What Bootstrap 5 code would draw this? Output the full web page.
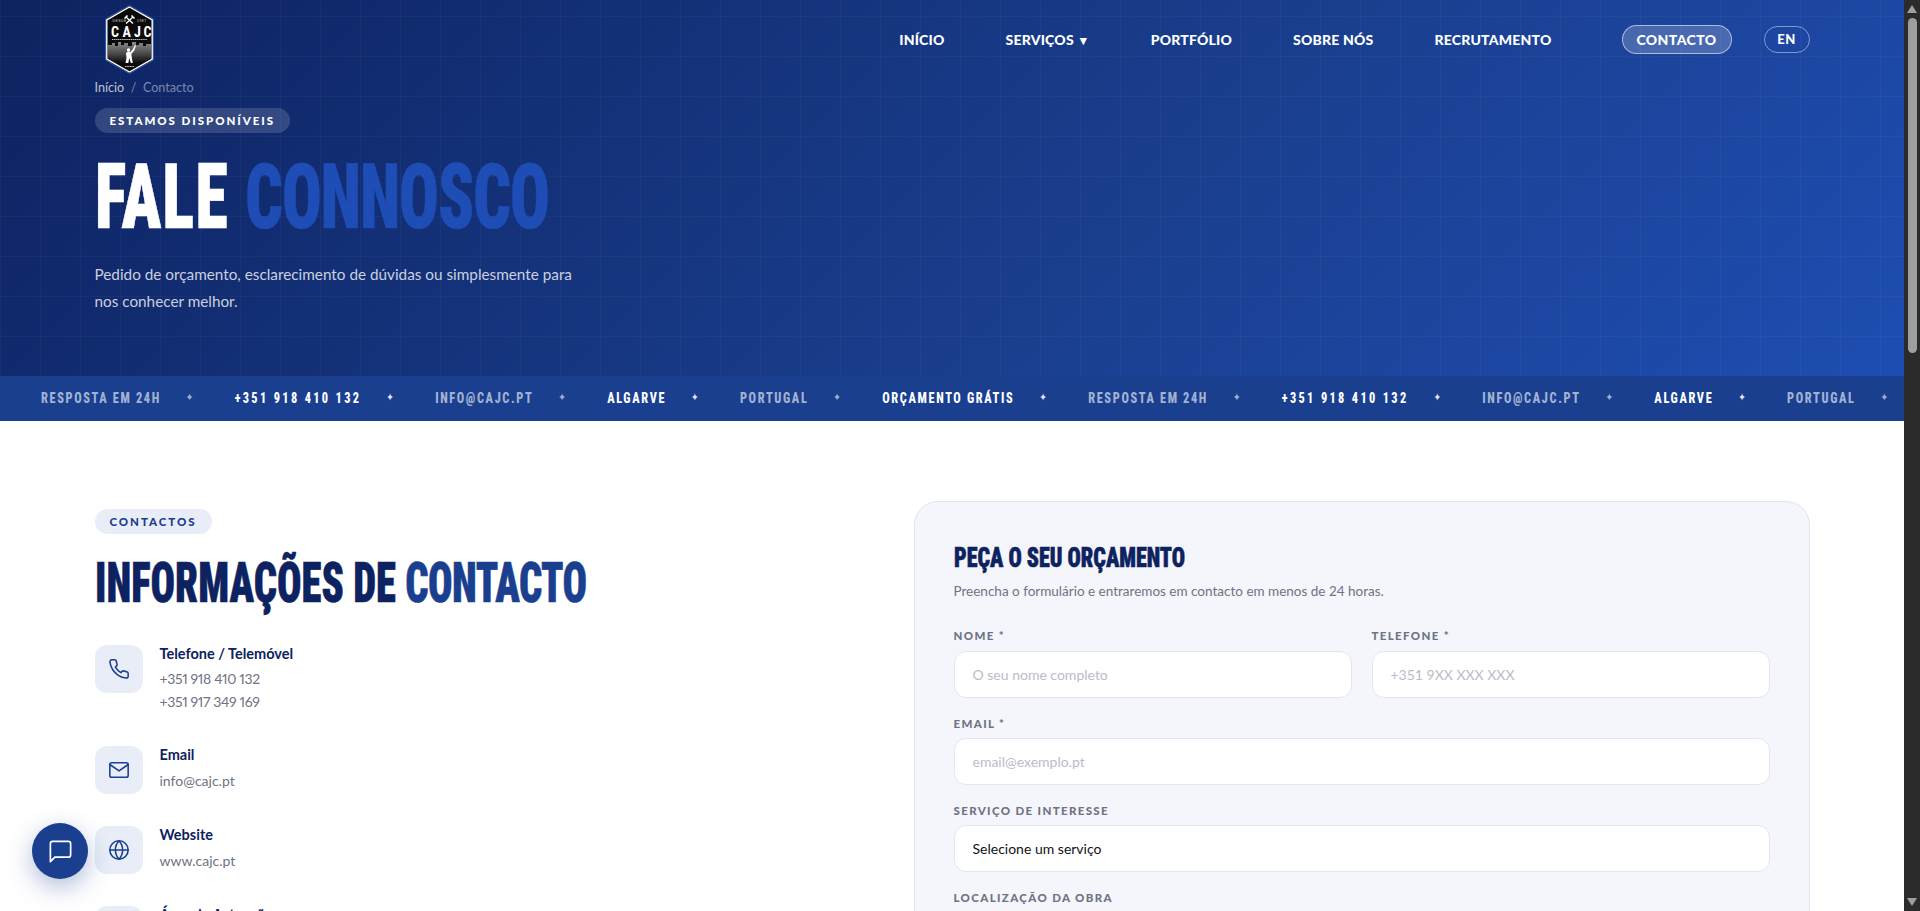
<!DOCTYPE html>
<html lang="pt">
<head>
<meta charset="utf-8">
<title>Contacto</title>
<link href="https://cdn.jsdelivr.net/npm/bootstrap@5.3.0/dist/css/bootstrap.min.css" rel="stylesheet">
<style>
html,body{height:911px;overflow:hidden;margin:0;background:#fff}
body{font-family:"Lato","Noto Sans",sans-serif;color:#0d2260}
.shell{height:911px;overflow:hidden}
.pagecol{flex:1 1 auto;min-width:0;height:911px;overflow:hidden}
.sbar{width:16px;flex:0 0 16px;background:#2b2b2b;height:911px}
.sb-arrow{height:18px}
.sb-thumb{width:9px;height:335px;margin-left:4px;background:#9f9f9f;border-radius:5px}
.hero{height:376px;padding:5px 94.5px 0 94.5px;background-color:#0f2566;
 background-image:linear-gradient(rgba(255,255,255,.03) 1px,transparent 1px),linear-gradient(90deg,rgba(255,255,255,.03) 1px,transparent 1px),linear-gradient(135deg,#0d2260 0%,#1a3f8f 60%,#1e4db2 100%);
 background-size:40px 40px,40px 40px,100% 100%;background-position:0 16px,0 0,0 0}
.logo-box{margin-left:10px;width:49px;height:69px}
.logo-txt{font-family:"Roboto","Liberation Sans",sans-serif;font-stretch:75%;font-weight:700;font-size:14px;fill:#fff}
.nav-top{height:69px}
.nav-lnk{color:#fff;text-decoration:none;font-weight:900;font-size:14px;letter-spacing:.2px;margin-right:61px;white-space:nowrap}
.nav-lnk.last{margin-right:70px}
.btn-contact{color:#fff;font-weight:900;font-size:14px;letter-spacing:.4px;background:rgba(255,255,255,.2);border:1px solid rgba(255,255,255,.55);border-radius:15px;width:110px;height:29px;line-height:27px;padding:0;margin-right:32px}
.btn-lang{color:#fff;font-weight:900;font-size:13px;letter-spacing:.6px;background:transparent;border:1px solid rgba(255,255,255,.45);border-radius:14px;width:46px;height:27px;line-height:25px;padding:0}
.crumbs{margin-top:5px;height:18px;line-height:18px;font-size:12.6px;color:rgba(255,255,255,.45)}
.crumbs b{font-weight:400;color:rgba(255,255,255,.72)}
.crumbs i{font-style:normal;margin:0 6.5px}
.pill-hero{display:inline-block;margin-top:11px;height:25px;line-height:25px;padding:0 15px;border-radius:13px;background:rgba(255,255,255,.15);color:#fff;font-size:11.5px;font-weight:900;letter-spacing:1.95px}
.display-cond{font-family:"Roboto","Liberation Sans",sans-serif;font-stretch:75%;font-weight:900;text-transform:uppercase;margin:0;white-space:nowrap;transform-origin:0 50%;-webkit-text-stroke:.6px currentColor}
.h-main{font-size:91px;line-height:91px;margin-top:19px;color:#fff;transform:scaleX(.725);letter-spacing:1.7px}
.h-main span{color:#1e4db5;letter-spacing:-1.4px}
.hero-p{margin:18px 0 0;font-size:15.3px;line-height:27px;color:rgba(255,255,255,.78)}
.ticker{height:45px;background:#1a3f8f;overflow:hidden;white-space:nowrap;padding-left:41px}
.tk-track{transform:scaleX(.82);transform-origin:0 50%}
.tk-item{font-family:"Roboto","Liberation Sans",sans-serif;font-stretch:75%;font-weight:800;font-size:15px;letter-spacing:2px;color:rgba(255,255,255,.62)}
.tk-item.on{color:#fff}
.tk-item.tk-num{letter-spacing:2.85px}
.tk-star{font-family:"DejaVu Sans",sans-serif;font-size:11px;color:rgba(255,255,255,.9);width:10px;text-align:center;margin:0 50px 0 30px}
.tk-star.dim{color:rgba(255,255,255,.6)}
.sect{padding:80px 94.5px 0 94.5px}
.left-col{flex:1 1 auto;min-width:0;padding-top:7px}
.pill-soft{display:inline-block;height:25px;line-height:25px;padding:0 15px;border-radius:13px;background:#e8edf7;color:#1a3f8f;font-size:11.5px;font-weight:900;letter-spacing:1.95px}
.h-sec{font-size:56px;line-height:56px;margin-top:21px;color:#0d2260;transform:scaleX(.727)}
.h-sec span{color:#1a3f8f;letter-spacing:-.8px}
.info-list{margin-top:34px}
.info-row{margin-bottom:32px}
.tile{width:48px;height:48px;flex:0 0 48px;border-radius:12px;background:#e8edf7;color:#1a3f8f;margin-right:17px}
.info-t{font-size:14.5px;font-weight:700;color:#0d2260;line-height:18px}
.info-v{font-size:14px;line-height:23px;color:#6f7385;margin-top:5px}
.info-num{font-variant-numeric:proportional-nums;letter-spacing:-.35px;margin-top:4px;padding-bottom:1px}
.form-wrap{flex:0 0 896px;width:896px;height:640px;background:#f4f6fb;border:1px solid #dfe4f0;border-radius:24px;padding:39px}
.h-form{font-size:28px;line-height:30px;color:#0d2260;margin-top:2px;transform:scaleX(.787)}
.form-sub{font-size:13.5px;line-height:18px;color:#6f7385;margin:9px 0 29px}
.fld-lbl{display:block;font-size:11.5px;font-weight:900;letter-spacing:1.35px;color:#6f7385;line-height:14px;margin-bottom:8px}
.fld-gap>.fld-lbl{margin-bottom:7px}
.fld{height:47px;border:1px solid #e2e6f0;border-radius:12px;background:#fff;padding:0 18px;font-size:14px;color:#111;appearance:none;box-shadow:none}
.fld::placeholder{color:#b9bcc8;opacity:1}
.fld-gap{margin-bottom:19px}
.row-form{--bs-gutter-x:20px}
.chat-btn{position:fixed;left:32px;top:823px;width:56px;height:56px;border-radius:50%;background:#1a3f8f;border:0;color:#fff;box-shadow:0 8px 24px rgba(26,63,143,.35);padding:0}
</style>
</head>
<body>
<div class="shell d-flex">
<div class="pagecol">
  <header class="hero">
    <nav class="nav-top d-flex align-items-center">
      <a href="#" class="logo-box d-block">
        <svg width="49" height="69" viewBox="0 0 49 69" aria-label="CAJC">
          <defs><linearGradient id="sky" x1="0" y1="0" x2="0" y2="1"><stop offset="0" stop-color="#8a8a8a"/><stop offset=".55" stop-color="#4a4a4a"/><stop offset="1" stop-color="#0a0a0a"/></linearGradient></defs>
          <polygon points="24.5,.5 48.5,14 48.5,55 24.5,68.5 .5,55 .5,14" fill="#0a0a0a" stroke="#2a5bc4" stroke-width="1"/>
          <polygon points="24.5,2 47.2,14.8 47.2,54.2 24.5,67 1.8,54.2 1.8,14.8" fill="#0a0a0a" stroke="#fff" stroke-width="1.4"/>
          <polygon points="3,45 3,40 7,40 7,38 10,38 10,41 13,41 13,37 16,37 16,40 19,40 19,38 23,38 23,41 27,41 27,37 31,37 31,40 34,40 34,38 38,38 38,41 41,41 41,39 46,39 46,53 38,58 11,58 3,53" fill="url(#sky)"/>
          <path d="M21 12l7 6.5M28 12l-7 6.5" stroke="#fff" stroke-width="1.3"/><path d="M19.5 13.5l3-3M29.5 13.5l-3-3" stroke="#fff" stroke-width="1.6"/>
          <text x="7.5" y="17" font-family="Liberation Sans" font-size="3.4" letter-spacing=".5" fill="#ddd">DESDE</text>
          <text x="32" y="17" font-family="Liberation Sans" font-size="3.4" letter-spacing=".5" fill="#ddd">1987</text>
          <text class="logo-txt" x="6 17.500 29 38.500" y="32">CAJC</text>
          <line x1="7" y1="34.5" x2="42" y2="34.5" stroke="#bbb" stroke-width="1.1" stroke-dasharray="1.4 .5"/>
          <circle cx="23.5" cy="45" r="1.7" fill="#fff"/>
          <path d="M20.5 58l1-5-.5-5 2-1.5 2.500 .5 2.500-3 2-4 1 .5-1.700 5-3 3.500 .5 3.500 1 5.500h-2l-1.500-5-1 5z" fill="#fff"/>
          <line x1="20" y1="61.500" x2="29" y2="61.500" stroke="#ccc" stroke-width="1" stroke-dasharray="1.200 .4"/>
        </svg>
      </a>
      <div class="ms-auto d-flex align-items-center">
        <a href="#" class="nav-lnk">INÍCIO</a>
        <a href="#" class="nav-lnk">SERVIÇOS <small>▼</small></a>
        <a href="#" class="nav-lnk">PORTFÓLIO</a>
        <a href="#" class="nav-lnk">SOBRE NÓS</a>
        <a href="#" class="nav-lnk last">RECRUTAMENTO</a>
        <button class="btn-contact">CONTACTO</button>
        <button class="btn-lang">EN</button>
      </div>
    </nav>
    <div class="crumbs"><b>Início</b><i>/</i>Contacto</div>
    <div class="pill-hero">ESTAMOS DISPONÍVEIS</div>
    <h1 class="display-cond h-main">Fale <span>Connosco</span></h1>
    <p class="hero-p">Pedido de orçamento, esclarecimento de dúvidas ou simplesmente para<br>nos conhecer melhor.</p>
  </header>
  <div class="ticker d-flex align-items-center">
    <div class="tk-track d-flex align-items-center">
    <span class="tk-item">RESPOSTA EM 24H</span><span class="tk-star dim">✦</span>
    <span class="tk-item on tk-num">+351 918 410 132</span><span class="tk-star">✦</span>
    <span class="tk-item">INFO@CAJC.PT</span><span class="tk-star dim">✦</span>
    <span class="tk-item on">ALGARVE</span><span class="tk-star">✦</span>
    <span class="tk-item">PORTUGAL</span><span class="tk-star dim">✦</span>
    <span class="tk-item on">ORÇAMENTO GRÁTIS</span><span class="tk-star">✦</span>
    <span class="tk-item">RESPOSTA EM 24H</span><span class="tk-star dim">✦</span>
    <span class="tk-item on tk-num">+351 918 410 132</span><span class="tk-star">✦</span>
    <span class="tk-item">INFO@CAJC.PT</span><span class="tk-star dim">✦</span>
    <span class="tk-item on">ALGARVE</span><span class="tk-star">✦</span>
    <span class="tk-item">PORTUGAL</span><span class="tk-star dim">✦</span>
    </div>
  </div>
  <section class="sect d-flex">
    <div class="left-col">
      <div class="pill-soft">CONTACTOS</div>
      <h2 class="display-cond h-sec">Informações de <span>Contacto</span></h2>
      <div class="info-list">
        <div class="info-row d-flex">
          <div class="tile d-flex align-items-center justify-content-center">
            <svg width="22" height="22" viewBox="0 0 24 24" fill="none" stroke="currentColor" stroke-width="1.7" stroke-linecap="round" stroke-linejoin="round"><path d="M22 16.92v3a2 2 0 0 1-2.18 2 19.79 19.79 0 0 1-8.63-3.07 19.5 19.5 0 0 1-6-6 19.79 19.79 0 0 1-3.07-8.67A2 2 0 0 1 4.11 2h3a2 2 0 0 1 2 1.72 12.84 12.84 0 0 0 .7 2.81 2 2 0 0 1-.45 2.11L8.09 9.91a16 16 0 0 0 6 6l1.27-1.27a2 2 0 0 1 2.11-.45 12.84 12.84 0 0 0 2.81.7A2 2 0 0 1 22 16.92z"/></svg>
          </div>
          <div><div class="info-t">Telefone / Telemóvel</div><div class="info-v info-num">+351 918 410 132<br>+351 917 349 169</div></div>
        </div>
        <div class="info-row d-flex">
          <div class="tile d-flex align-items-center justify-content-center">
            <svg width="22" height="22" viewBox="0 0 24 24" fill="none" stroke="currentColor" stroke-width="1.7" stroke-linecap="round" stroke-linejoin="round"><rect x="2" y="4" width="20" height="16" rx="2"/><path d="m22 6-10 7L2 6"/></svg>
          </div>
          <div><div class="info-t">Email</div><div class="info-v">info@cajc.pt</div></div>
        </div>
        <div class="info-row d-flex">
          <div class="tile d-flex align-items-center justify-content-center">
            <svg width="22" height="22" viewBox="0 0 24 24" fill="none" stroke="currentColor" stroke-width="1.7" stroke-linecap="round" stroke-linejoin="round"><circle cx="12" cy="12" r="10"/><path d="M2 12h20"/><path d="M12 2a15.3 15.3 0 0 1 4 10 15.3 15.3 0 0 1-4 10 15.3 15.3 0 0 1-4-10 15.3 15.3 0 0 1 4-10z"/></svg>
          </div>
          <div><div class="info-t">Website</div><div class="info-v">www.cajc.pt</div></div>
        </div>
        <div class="info-row d-flex">
          <div class="tile"></div>
          <div><div class="info-t">Área de Actuação</div><div class="info-v">Algarve, Portugal</div></div>
        </div>
      </div>
    </div>
    <div class="form-wrap">
      <h3 class="display-cond h-form">Peça o seu orçamento</h3>
      <p class="form-sub">Preencha o formulário e entraremos em contacto em menos de 24 horas.</p>
      <div class="row row-form fld-gap">
        <div class="col-6"><label class="fld-lbl">NOME *</label><input class="form-control fld" placeholder="O seu nome completo"></div>
        <div class="col-6"><label class="fld-lbl">TELEFONE *</label><input class="form-control fld" placeholder="+351 9XX XXX XXX"></div>
      </div>
      <div class="fld-gap"><label class="fld-lbl">EMAIL *</label><input class="form-control fld" placeholder="email@exemplo.pt"></div>
      <div class="fld-gap"><label class="fld-lbl">SERVIÇO DE INTERESSE</label><select class="form-control fld"><option>Selecione um serviço</option></select></div>
      <div class="fld-gap"><label class="fld-lbl">LOCALIZAÇÃO DA OBRA</label><input class="form-control fld"></div>
    </div>
  </section>
</div>
<div class="sbar d-flex flex-column">
  <div class="sb-arrow d-flex justify-content-center align-items-center"><svg width="10" height="8" viewBox="0 0 10 8"><polygon points="5,0 10,8 0,8" fill="#a0a0a0"/></svg></div>
  <div class="sb-thumb"></div>
  <div class="flex-grow-1"></div>
  <div class="sb-arrow d-flex justify-content-center align-items-center"><svg width="10" height="8" viewBox="0 0 10 8"><polygon points="5,8 10,0 0,0" fill="#a0a0a0"/></svg></div>
</div>
</div>
<button class="chat-btn d-flex align-items-center justify-content-center" aria-label="Chat">
  <svg width="27" height="27" viewBox="0 0 24 24" fill="none" stroke="currentColor" stroke-width="1.5" stroke-linejoin="round"><path d="M21 15a2 2 0 0 1-2 2H7l-4 4V5a2 2 0 0 1 2-2h14a2 2 0 0 1 2 2z"/></svg>
</button>
<script src="https://cdn.jsdelivr.net/npm/bootstrap@5.3.0/dist/js/bootstrap.bundle.min.js"></script>
</body>
</html>
